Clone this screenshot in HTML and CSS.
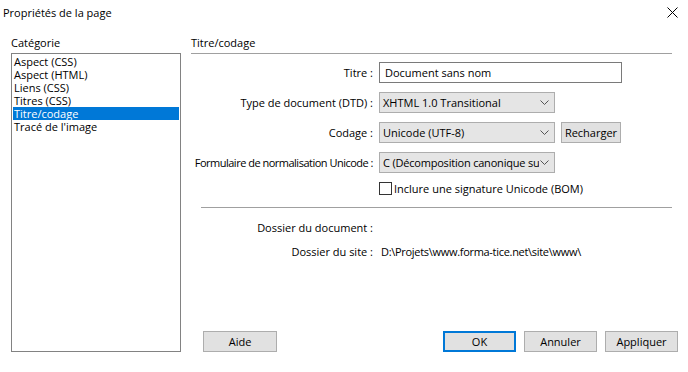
FILE: index.html
```html
<!DOCTYPE html>
<html lang="fr">
<head>
    <meta charset="UTF-8">
    <title>Propriétés de la page</title>
    <link rel="stylesheet" href="styles.css">
</head>
<body>
    <div class="dialogue">
        <div class="barre-titre">
            <span>Propriétés de la page</span>
            <svg class="fermer" width="11" height="11" viewBox="0 0 11 11">
                <path d="M0.5 0.5 L10.5 10.5 M10.5 0.5 L0.5 10.5" stroke="#000" stroke-width="1" fill="none"/>
            </svg>
        </div>
        <div class="contenu">
            <div class="categorie">
                <div class="categorie-titre">Catégorie</div>
                <ul class="liste">
                    <li>Aspect (CSS)</li>
                    <li>Aspect (HTML)</li>
                    <li>Liens (CSS)</li>
                    <li>Titres (CSS)</li>
                    <li class="actif">Titre/codage</li>
                    <li>Tracé de l'image</li>
                </ul>
            </div>
            <div class="panneau">
                <div class="panneau-titre">Titre/codage</div>
                <div class="formulaire">
                    <span class="etiquette">Titre :</span>
                    <div class="champ">Document sans nom</div>

                    <span class="etiquette">Type de document (DTD) :</span>
                    <div class="liste-deroulante">
                        <span>XHTML 1.0 Transitional</span>
                        <svg class="chevron" width="9" height="5" viewBox="0 0 9 5"><path d="M0.5 0.5 L4.5 4.5 L8.5 0.5" stroke="#555" fill="none"/></svg>
                    </div>

                    <span class="etiquette">Codage :</span>
                    <div class="ligne">
                        <div class="liste-deroulante">
                            <span>Unicode (UTF-8)</span>
                            <svg class="chevron" width="9" height="5" viewBox="0 0 9 5"><path d="M0.5 0.5 L4.5 4.5 L8.5 0.5" stroke="#555" fill="none"/></svg>
                        </div>
                        <button class="bouton recharger">Recharger</button>
                    </div>

                    <span class="etiquette etiquette-longue">Formulaire de normalisation Unicode :</span>
                    <div class="liste-deroulante">
                        <span class="tronque">C (Décomposition canonique suivie de composition canonique)</span>
                        <svg class="chevron" width="9" height="5" viewBox="0 0 9 5"><path d="M0.5 0.5 L4.5 4.5 L8.5 0.5" stroke="#555" fill="none"/></svg>
                    </div>

                    <span></span>
                    <div class="case-ligne">
                        <span class="case"></span>
                        <span>Inclure une signature Unicode (BOM)</span>
                    </div>
                </div>

                <div class="separateur"></div>

                <div class="infos">
                    <span class="etiquette">Dossier du document :</span>
                    <span></span>
                    <span class="etiquette">Dossier du site :</span>
                    <span class="valeur">D:\Projets\www.forma-tice.net\site\www\</span>
                </div>

                <div class="actions">
                    <button class="bouton aide">Aide</button>
                    <div class="actions-droite">
                        <button class="bouton ok">OK</button>
                        <button class="bouton">Annuler</button>
                        <button class="bouton">Appliquer</button>
                    </div>
                </div>
            </div>
        </div>
    </div>
</body>
</html>
```

FILE: styles.css
```css
body {
    margin: 0;
    font-family: 'Open Sans', 'Noto Sans', sans-serif;
    font-size: 11px;
    color: #000000;
    background-color: #ffffff;
}
.dialogue {
    width: 688px;
    height: 372px;
    display: flex;
    flex-direction: column;
}
.barre-titre {
    height: 24px;
    display: flex;
    align-items: center;
    justify-content: space-between;
    padding: 0 10px 0 3px;
}
.contenu {
    flex: 1;
    display: flex;
    padding: 11px 10px 20px 11px;
}
.categorie {
    width: 170px;
    margin-right: 10px;
    display: flex;
    flex-direction: column;
}
.categorie-titre {
    height: 18px;
    line-height: 16px;
}
.liste {
    flex: 1;
    margin: 0;
    padding: 1px;
    list-style: none;
    border: 1px solid #828282;
}
.liste li {
    height: 13px;
    line-height: 13px;
    padding-left: 1px;
}
.liste li.actif {
    background-color: #0078d7; /* bleu selection */
    color: #ffffff;
}
.panneau {
    flex: 1;
    display: flex;
    flex-direction: column;
}
.panneau-titre {
    height: 18px;
    line-height: 16px;
    margin-right: 6px;
    border-bottom: 1px solid #a0a0a0;
}
.formulaire {
    display: grid;
    grid-template-columns: 182px auto;
    column-gap: 6px;
    row-gap: 9px;
    margin-top: 8px;
    align-items: center;
}
.etiquette {
    text-align: right;
    white-space: nowrap;
}
.etiquette-longue {
    letter-spacing: -0.5px;
}
.champ {
    box-sizing: border-box;
    width: 243px;
    height: 21px;
    line-height: 19px;
    padding-left: 5px;
    border: 1px solid #7a7a7a;
}
.liste-deroulante {
    box-sizing: border-box;
    width: 176px;
    height: 21px;
    padding: 0 5px 0 3px;
    display: flex;
    align-items: center;
    justify-content: space-between;
    border: 1px solid #adadad;
    background-color: #e5e5e5;
}
.tronque {
    width: 156px;
    white-space: nowrap;
    overflow: hidden;
    letter-spacing: -0.2px;
}
.ligne {
    display: flex;
    gap: 6px;
}
.bouton {
    box-sizing: border-box;
    width: 73px;
    height: 21px;
    padding: 0;
    font: inherit;
    color: #000000;
    border: 1px solid #adadad;
    background-color: #e1e1e1;
}
.recharger {
    width: 60px;
}
.aide {
    width: 74px;
}
.ok {
    border: 2px solid #0078d7;
}
.case-ligne {
    display: flex;
    align-items: center;
    gap: 2px;
    margin-top: -2px;
    height: 16px;
}
.case {
    box-sizing: border-box;
    width: 13px;
    height: 13px;
    border: 1px solid #333333;
    background-color: #ffffff;
}
.separateur {
    margin: 11px 6px 0 10px;
    border-top: 1px solid #a0a0a0;
}
.infos {
    display: grid;
    grid-template-columns: 182px auto;
    column-gap: 8px;
    row-gap: 8px;
    margin-top: 12px;
    line-height: 16px;
}
.valeur {
    letter-spacing: -0.3px;
}
.actions {
    margin-top: auto;
    display: flex;
    justify-content: space-between;
    padding-left: 12px;
}
.actions-droite {
    display: flex;
    gap: 8px;
}
```
